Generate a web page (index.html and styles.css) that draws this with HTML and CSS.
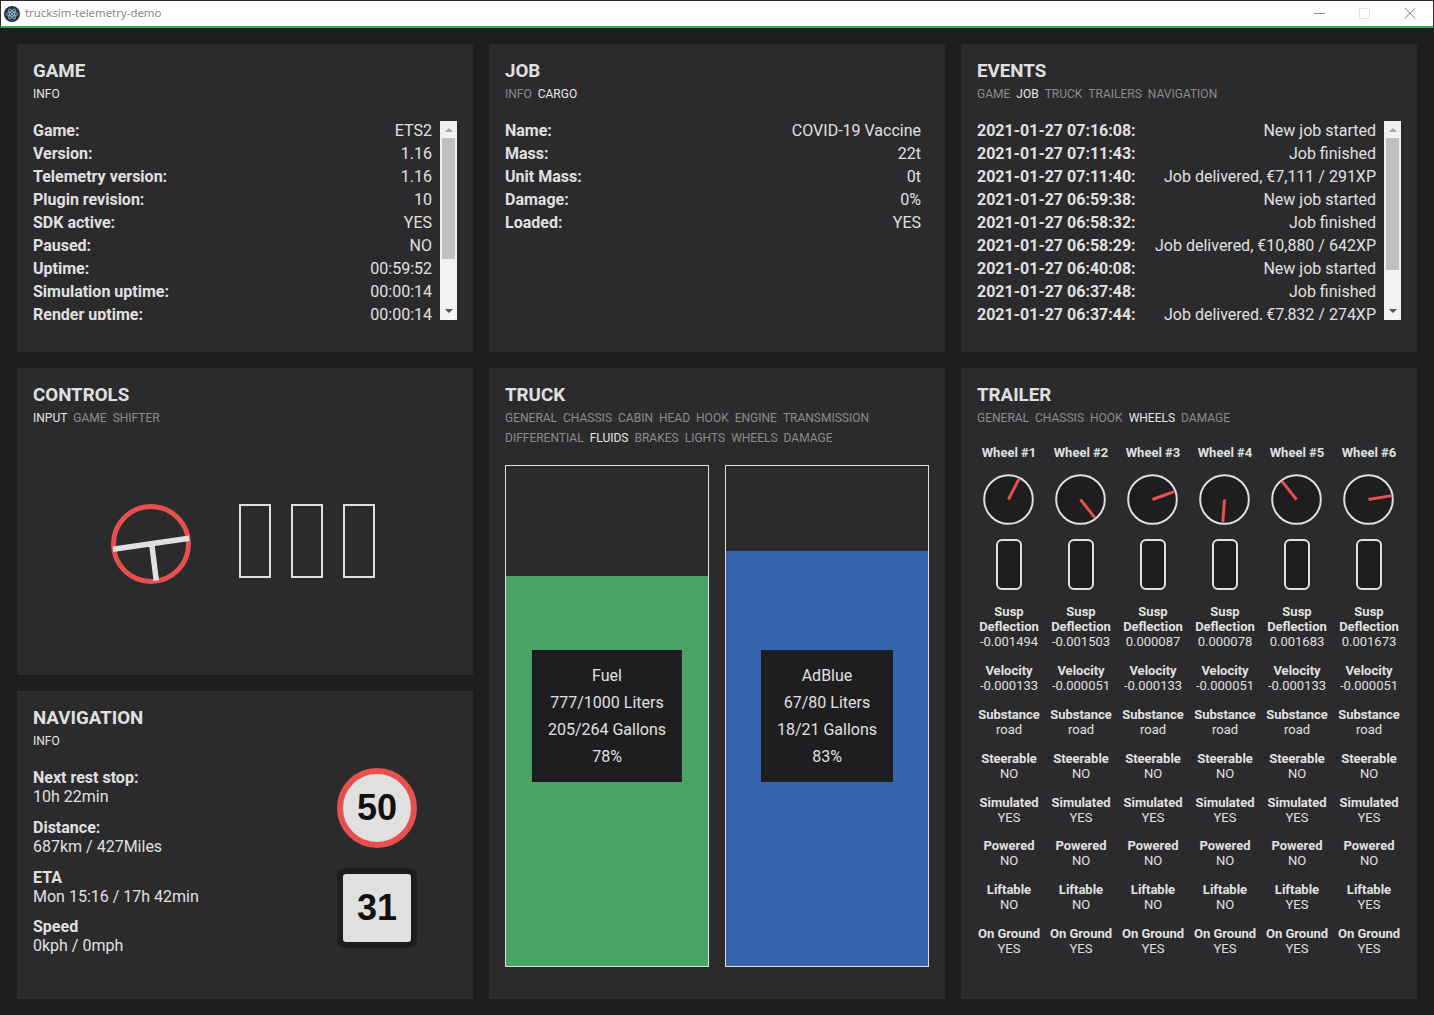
FILE: index.html
```html
<!DOCTYPE html>
<html lang="en">
<head>
  <meta charset="UTF-8" />
  <title>trucksim-telemetry-demo</title>
  <link rel="stylesheet" href="styles.css">
</head>
<body>
  <header class="titlebar">
    <svg class="app-icon" viewBox="0 0 16 16">
      <circle cx="8" cy="8" r="8" fill="#2f3242"/>
      <g fill="none" stroke="#9fe3f5" stroke-width=".7">
        <ellipse cx="8" cy="8" rx="5.6" ry="2.2"/>
        <ellipse cx="8" cy="8" rx="5.6" ry="2.2" transform="rotate(60 8 8)"/>
        <ellipse cx="8" cy="8" rx="5.6" ry="2.2" transform="rotate(120 8 8)"/>
      </g>
      <circle cx="8" cy="8" r="1" fill="#9fe3f5"/>
    </svg>
    <span class="app-title">trucksim-telemetry-demo</span>
    <div class="win-buttons">
      <svg viewBox="0 0 46 25" class="win-btn"><path d="M19 12.5h11" stroke="#8a8a8a" fill="none"/></svg>
      <svg viewBox="0 0 46 25" class="win-btn"><path d="M18.5 7.5h10v10h-10z" stroke="#e4e4e4" fill="none"/></svg>
      <svg viewBox="0 0 46 25" class="win-btn"><path d="M17.7 7l10.6 10.6M28.3 7L17.7 17.6" stroke="#7c7c7c" fill="none"/></svg>
    </div>
  </header>

  <main class="dashboard">
    <section class="panel">
      <h2>GAME</h2>
      <nav class="tabs"><a class="active">INFO</a></nav>
      <div class="scroller">
        <div class="rows">
          <div class="row"><b>Game:</b><span>ETS2</span></div>
          <div class="row"><b>Version:</b><span>1.16</span></div>
          <div class="row"><b>Telemetry version:</b><span>1.16</span></div>
          <div class="row"><b>Plugin revision:</b><span>10</span></div>
          <div class="row"><b>SDK active:</b><span>YES</span></div>
          <div class="row"><b>Paused:</b><span>NO</span></div>
          <div class="row"><b>Uptime:</b><span>00:59:52</span></div>
          <div class="row"><b>Simulation uptime:</b><span>00:00:14</span></div>
          <div class="row"><b>Render uptime:</b><span>00:00:14</span></div>
        </div>
        <div class="scrollbar">
          <i class="arrow up"></i>
          <div class="track"><div class="thumb" style="height:121px"></div></div>
          <i class="arrow down"></i>
        </div>
      </div>
    </section>

    <section class="panel">
      <h2>JOB</h2>
      <nav class="tabs"><a>INFO</a><a class="active">CARGO</a></nav>
      <div class="scroller">
        <div class="rows">
          <div class="row"><b>Name:</b><span>COVID-19 Vaccine</span></div>
          <div class="row"><b>Mass:</b><span>22t</span></div>
          <div class="row"><b>Unit Mass:</b><span>0t</span></div>
          <div class="row"><b>Damage:</b><span>0%</span></div>
          <div class="row"><b>Loaded:</b><span>YES</span></div>
        </div>
      </div>
    </section>

    <section class="panel">
      <h2>EVENTS</h2>
      <nav class="tabs"><a>GAME</a><a class="active">JOB</a><a>TRUCK</a><a>TRAILERS</a><a>NAVIGATION</a></nav>
      <div class="scroller">
        <div class="rows">
          <div class="row"><b>2021-01-27 07:16:08:</b><span>New job started</span></div>
          <div class="row"><b>2021-01-27 07:11:43:</b><span>Job finished</span></div>
          <div class="row"><b>2021-01-27 07:11:40:</b><span>Job delivered, €7,111 / 291XP</span></div>
          <div class="row"><b>2021-01-27 06:59:38:</b><span>New job started</span></div>
          <div class="row"><b>2021-01-27 06:58:32:</b><span>Job finished</span></div>
          <div class="row"><b>2021-01-27 06:58:29:</b><span>Job delivered, €10,880 / 642XP</span></div>
          <div class="row"><b>2021-01-27 06:40:08:</b><span>New job started</span></div>
          <div class="row"><b>2021-01-27 06:37:48:</b><span>Job finished</span></div>
          <div class="row"><b>2021-01-27 06:37:44:</b><span>Job delivered, €7,832 / 274XP</span></div>
        </div>
        <div class="scrollbar">
          <i class="arrow up"></i>
          <div class="track"><div class="thumb" style="height:132px"></div></div>
          <i class="arrow down"></i>
        </div>
      </div>
    </section>

    <section class="panel controls">
      <h2>CONTROLS</h2>
      <nav class="tabs"><a class="active">INPUT</a><a>GAME</a><a>SHIFTER</a></nav>
      <div class="controls-body">
        <svg class="steering" viewBox="0 0 80 80">
          <circle cx="40" cy="40" r="37.5" fill="none" stroke="#e85050" stroke-width="5"/>
          <path d="M2 45.3L78.3 34.3M40.7 39.6L45.3 76.7" fill="none" stroke="#e0e0e0" stroke-width="5.5"/>
        </svg>
        <div class="pedals">
          <div class="pedal"></div>
          <div class="pedal"></div>
          <div class="pedal"></div>
        </div>
      </div>
    </section>

    <section class="panel navigation">
      <h2>NAVIGATION</h2>
      <nav class="tabs"><a class="active">INFO</a></nav>
      <div class="nav-body">
        <div class="nav-info">
          <p><b>Next rest stop:</b><br>10h 22min</p>
          <p><b>Distance:</b><br>687km / 427Miles</p>
          <p><b>ETA</b><br>Mon 15:16 / 17h 42min</p>
          <p><b>Speed</b><br>0kph / 0mph</p>
        </div>
        <div class="signs">
          <div class="sign limit">50</div>
          <div class="sign speed"><span>31</span></div>
        </div>
      </div>
    </section>

    <section class="panel truck">
      <h2>TRUCK</h2>
      <nav class="tabs">
        <a>GENERAL</a><a>CHASSIS</a><a>CABIN</a><a>HEAD</a><a>HOOK</a><a>ENGINE</a><a>TRANSMISSION</a>
        <a>DIFFERENTIAL</a><a class="active">FLUIDS</a><a>BRAKES</a><a>LIGHTS</a><a>WHEELS</a><a>DAMAGE</a>
      </nav>
      <div class="tanks">
        <div class="tank">
          <div class="level fuel" style="height:78%"></div>
          <div class="tank-label">Fuel<br>777/1000 Liters<br>205/264 Gallons<br>78%</div>
        </div>
        <div class="tank">
          <div class="level adblue" style="height:83%"></div>
          <div class="tank-label">AdBlue<br>67/80 Liters<br>18/21 Gallons<br>83%</div>
        </div>
      </div>
    </section>

    <section class="panel trailer">
      <h2>TRAILER</h2>
      <nav class="tabs"><a>GENERAL</a><a>CHASSIS</a><a>HOOK</a><a class="active">WHEELS</a><a>DAMAGE</a></nav>
      <div class="wheels">
        <div class="wheel">
          <h3>Wheel #1</h3>
          <svg class="dial" viewBox="0 0 52 52"><circle cx="26" cy="26" r="24.8"/><line x1="26" y1="26" x2="36.7" y2="5"/></svg>
          <div class="susp"></div>
          <div class="stat"><b>Susp Deflection</b>-0.001494</div>
          <div class="stat"><b>Velocity</b>-0.000133</div>
          <div class="stat"><b>Substance</b>road</div>
          <div class="stat"><b>Steerable</b>NO</div>
          <div class="stat"><b>Simulated</b>YES</div>
          <div class="stat"><b>Powered</b>NO</div>
          <div class="stat"><b>Liftable</b>NO</div>
          <div class="stat"><b>On Ground</b>YES</div>
        </div>
        <div class="wheel">
          <h3>Wheel #2</h3>
          <svg class="dial" viewBox="0 0 52 52"><circle cx="26" cy="26" r="24.8"/><line x1="26" y1="26" x2="40.5" y2="44.5"/></svg>
          <div class="susp"></div>
          <div class="stat"><b>Susp Deflection</b>-0.001503</div>
          <div class="stat"><b>Velocity</b>-0.000051</div>
          <div class="stat"><b>Substance</b>road</div>
          <div class="stat"><b>Steerable</b>NO</div>
          <div class="stat"><b>Simulated</b>YES</div>
          <div class="stat"><b>Powered</b>NO</div>
          <div class="stat"><b>Liftable</b>NO</div>
          <div class="stat"><b>On Ground</b>YES</div>
        </div>
        <div class="wheel">
          <h3>Wheel #3</h3>
          <svg class="dial" viewBox="0 0 52 52"><circle cx="26" cy="26" r="24.8"/><line x1="26" y1="26" x2="48" y2="18"/></svg>
          <div class="susp"></div>
          <div class="stat"><b>Susp Deflection</b>0.000087</div>
          <div class="stat"><b>Velocity</b>-0.000133</div>
          <div class="stat"><b>Substance</b>road</div>
          <div class="stat"><b>Steerable</b>NO</div>
          <div class="stat"><b>Simulated</b>YES</div>
          <div class="stat"><b>Powered</b>NO</div>
          <div class="stat"><b>Liftable</b>NO</div>
          <div class="stat"><b>On Ground</b>YES</div>
        </div>
        <div class="wheel">
          <h3>Wheel #4</h3>
          <svg class="dial" viewBox="0 0 52 52"><circle cx="26" cy="26" r="24.8"/><line x1="26" y1="26" x2="24.3" y2="49"/></svg>
          <div class="susp"></div>
          <div class="stat"><b>Susp Deflection</b>0.000078</div>
          <div class="stat"><b>Velocity</b>-0.000051</div>
          <div class="stat"><b>Substance</b>road</div>
          <div class="stat"><b>Steerable</b>NO</div>
          <div class="stat"><b>Simulated</b>YES</div>
          <div class="stat"><b>Powered</b>NO</div>
          <div class="stat"><b>Liftable</b>NO</div>
          <div class="stat"><b>On Ground</b>YES</div>
        </div>
        <div class="wheel">
          <h3>Wheel #5</h3>
          <svg class="dial" viewBox="0 0 52 52"><circle cx="26" cy="26" r="24.8"/><line x1="26" y1="26" x2="11" y2="7.3"/></svg>
          <div class="susp"></div>
          <div class="stat"><b>Susp Deflection</b>0.001683</div>
          <div class="stat"><b>Velocity</b>-0.000133</div>
          <div class="stat"><b>Substance</b>road</div>
          <div class="stat"><b>Steerable</b>NO</div>
          <div class="stat"><b>Simulated</b>YES</div>
          <div class="stat"><b>Powered</b>NO</div>
          <div class="stat"><b>Liftable</b>YES</div>
          <div class="stat"><b>On Ground</b>YES</div>
        </div>
        <div class="wheel">
          <h3>Wheel #6</h3>
          <svg class="dial" viewBox="0 0 52 52"><circle cx="26" cy="26" r="24.8"/><line x1="26" y1="26" x2="50" y2="22"/></svg>
          <div class="susp"></div>
          <div class="stat"><b>Susp Deflection</b>0.001673</div>
          <div class="stat"><b>Velocity</b>-0.000051</div>
          <div class="stat"><b>Substance</b>road</div>
          <div class="stat"><b>Steerable</b>NO</div>
          <div class="stat"><b>Simulated</b>YES</div>
          <div class="stat"><b>Powered</b>NO</div>
          <div class="stat"><b>Liftable</b>YES</div>
          <div class="stat"><b>On Ground</b>YES</div>
        </div>
      </div>
    </section>
  </main>
</body>
</html>
```

FILE: styles.css
```css
body {
  margin: 0;
  height: 1015px;
  overflow: hidden;
  font-family: Roboto, sans-serif;
  font-size: 16px;
  color: #e0e0e0;
  background-color: #1e1e20;
}
b {
  font-weight: 700;
}

/* window chrome */
.titlebar {
  display: flex;
  align-items: center;
  height: 25px;
  padding-left: 3px;
  background-color: #fff;
  border: solid #2c2c2e;
  border-width: 1px 1px 0;
  border-bottom: 2px solid #3fa45f;
}
.app-icon {
  width: 16px;
  height: 16px;
  flex: none;
}
.app-title {
  margin-left: 5px;
  margin-bottom: 2px;
  font-family: "Noto Sans", sans-serif;
  font-size: 11.4px;
  color: #8a8a8a;
}
.win-buttons {
  display: flex;
  margin-left: auto;
}
.win-btn {
  display: block;
  width: 46px;
  height: 25px;
}

/* layout */
.dashboard {
  display: grid;
  grid-template-columns: repeat(3, 1fr);
  grid-template-rows: 308px 307px 308px;
  gap: 16px;
  padding: 16px 17px;
}
.panel {
  display: flex;
  flex-direction: column;
  min-width: 0;
  padding: 16px;
  background-color: #2b2b2d;
}
.truck {
  grid-column: 2;
  grid-row: 2 / 4;
}
.trailer {
  grid-column: 3;
  grid-row: 2 / 4;
}
.panel h2 {
  margin: 0;
  font-size: 18.72px;
  line-height: 23px;
  font-weight: 700;
}
.tabs {
  display: flex;
  flex-wrap: wrap;
  column-gap: 6px;
  margin: 1px 0 17px;
}
.tabs a {
  font-size: 12px;
  line-height: 20px;
  color: #8c8c8c;
}
.tabs a.active {
  color: #e6e6e6;
}

/* key/value lists */
.scroller {
  display: flex;
  height: 199px;
  overflow: hidden;
}
.rows {
  flex: 1;
  padding-right: 8px;
  margin-top: -2px;
}
.row {
  display: flex;
  justify-content: space-between;
  line-height: 23px;
}
.scrollbar {
  display: flex;
  flex-direction: column;
  align-items: center;
  flex: none;
  width: 17px;
  background-color: #f1f1f1;
}
.arrow {
  flex: none;
  width: 0;
  height: 0;
  border-left: 4px solid transparent;
  border-right: 4px solid transparent;
}
.arrow.up {
  margin: 7px 0 6px;
  border-bottom: 4px solid #a3a3a3;
}
.arrow.down {
  margin: 6px 0 7px;
  border-top: 4px solid #505050;
}
.track {
  flex: 1;
  width: 100%;
}
.thumb {
  margin: 0 2px;
  background-color: #c1c1c1;
}

/* controls */
.controls-body {
  display: flex;
  justify-content: center;
  gap: 48px;
  padding: 59px 4px 0 0;
}
.steering {
  display: block;
  width: 80px;
  height: 80px;
}
.pedals {
  display: flex;
  gap: 20px;
}
.pedal {
  box-sizing: border-box;
  width: 32px;
  height: 74px;
  border: 2px solid #e0e0e0;
}

/* navigation */
.nav-body {
  display: flex;
  justify-content: space-between;
  padding-right: 40px;
}
.nav-info p {
  margin: 0 0 11.8px;
  line-height: 19px;
}
.signs {
  display: flex;
  flex-direction: column;
  gap: 20px;
}
.sign {
  display: flex;
  align-items: center;
  justify-content: center;
  box-sizing: border-box;
  width: 80px;
  height: 80px;
  font-family: "Liberation Sans", sans-serif;
  font-size: 36px;
  font-weight: 700;
  color: #111;
}
.sign.limit {
  background-color: #e0e0e0;
  border: 6px solid #e85050;
  border-radius: 50%;
}
.sign.speed {
  background-color: #1e1e20;
  border-radius: 8px;
}
.sign.speed span {
  display: flex;
  align-items: center;
  justify-content: center;
  width: 68px;
  height: 68px;
  background-color: #e0e0e0;
  border-radius: 3px;
}

/* fluid tanks */
.tanks {
  display: flex;
  gap: 16px;
  height: 502px;
}
.tank {
  position: relative;
  display: flex;
  flex-direction: column;
  justify-content: flex-end;
  flex: 1;
  border: 1px solid #e0e0e0;
}
.level.fuel {
  background-color: #4ba365;
}
.level.adblue {
  background-color: #3665ae;
}
.tank-label {
  position: absolute;
  top: 50%;
  left: 50%;
  transform: translate(-50%, -50%);
  padding: 12px 16px;
  line-height: 27px;
  text-align: center;
  white-space: nowrap;
  background-color: #1e1e20;
}

/* trailer wheels */
.wheels {
  display: grid;
  grid-template-columns: repeat(6, 72px);
  justify-content: center;
}
.wheel {
  display: flex;
  flex-direction: column;
  align-items: center;
  font-size: 13px;
  line-height: 15px;
  text-align: center;
}
.wheel h3 {
  margin: 0 0 14px;
  font-size: 13px;
  line-height: 15px;
  font-weight: 700;
}
.dial {
  display: block;
  width: 51px;
  height: 51px;
  margin: 0 1px 14px 0;
}
.dial circle {
  fill: #1e1e20;
  stroke: #e0e0e0;
  stroke-width: 2;
}
.dial line {
  stroke: #e85050;
  stroke-width: 3;
}
.susp {
  box-sizing: border-box;
  width: 26px;
  height: 51px;
  margin-bottom: 14.3px;
  background-color: #1e1e20;
  border: 2px solid #e0e0e0;
  border-radius: 6px;
}
.stat {
  margin-bottom: 13.8px;
}
.susp + .stat {
  margin-bottom: 14px;
}
.stat b {
  display: block;
}
```
